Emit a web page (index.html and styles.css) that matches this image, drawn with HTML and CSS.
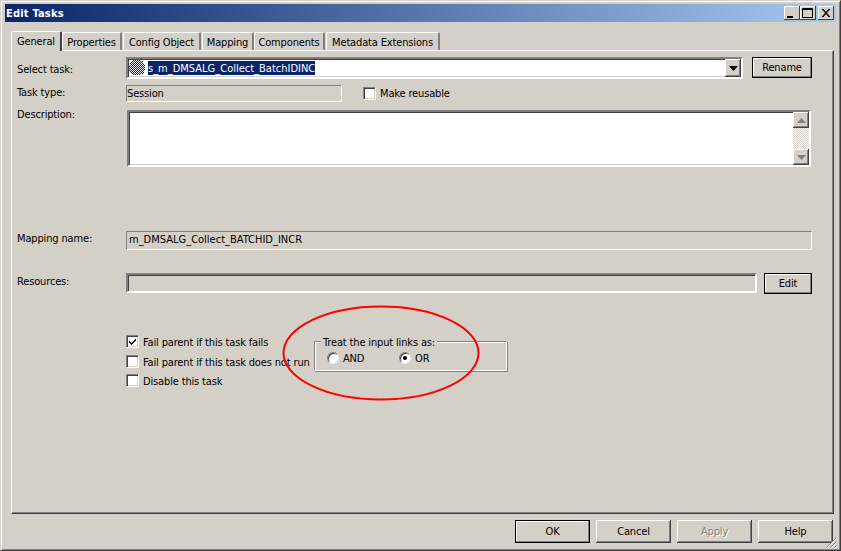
FILE: index.html
```html
<!DOCTYPE html>
<html lang="en">
<head>
<meta charset="utf-8">
<title>Edit Tasks</title>
<link rel="stylesheet" href="styles.css">
</head>
<body>
<div class="window">
  <div class="titlebar">
    <span class="title">Edit Tasks</span>
    <div class="caption-btns">
      <span class="cap"><svg width="16" height="14" viewBox="0 0 16 14"><rect x="3" y="10" width="6" height="2" fill="#000"/></svg></span>
      <span class="cap"><svg width="16" height="14" viewBox="0 0 16 14"><path d="M2.500 2.500h10v9h-10z M2.500 3.500h10" fill="none" stroke="#000"/></svg></span>
      <span class="cap cap-close"><svg width="16" height="14" viewBox="0 0 16 14"><path d="M4 3l7 8M5 3l7 8M11 3l-7 8M12 3l-7 8" fill="none" stroke="#000"/></svg></span>
    </div>
  </div>
  <div class="tabs">
    <span class="tab tab-active">General</span>
    <span class="tab tab-props">Properties</span>
    <span class="tab tab-config">Config Object</span>
    <span class="tab tab-map">Mapping</span>
    <span class="tab tab-comp">Components</span>
    <span class="tab tab-meta">Metadata Extensions</span>
  </div>
  <div class="pane">
    <div class="row row-select">
      <label class="lbl">Select task:</label>
      <div class="combo sunken">
        <svg class="task-icon" width="16" height="16" viewBox="0 0 16 16" shape-rendering="crispEdges"><defs><pattern id="dither" width="2" height="2" patternUnits="userSpaceOnUse"><rect width="2" height="2" fill="#eef0f6"/><rect width="1" height="1" fill="#0a246a"/><rect x="1" y="1" width="1" height="1" fill="#0a246a"/></pattern></defs><path d="M4 0h8v1h2v2h1v2h1v6h-1v2h-1v1h-2v1H4v-1H2v-1H1v-2H0V5h1V3h1V1h2z" fill="url(#dither)"/></svg>
        <span class="selected">s_m_DMSALG_Collect_BatchIDINC</span>
        <span class="drop raised"><svg width="9" height="5" viewBox="0 0 9 5"><path d="M0 0h9L4.500 5z" fill="#000"/></svg></span>
      </div>
      <button class="btn btn-default btn-rename" type="button">Rename</button>
    </div>
    <div class="row row-type">
      <label class="lbl">Task type:</label>
      <div class="readonly type-field">Session</div>
      <span class="check check-reuse"></span>
      <span class="check-text">Make reusable</span>
    </div>
    <div class="row row-desc">
      <label class="lbl">Description:</label>
      <div class="memo sunken">
        <div class="scroll">
          <span class="arrow raised"><svg width="9" height="5" viewBox="0 0 9 5"><path d="M0 5h9L4.500 0z" fill="#808080"/></svg></span>
          <span class="track"></span>
          <span class="arrow raised"><svg width="9" height="5" viewBox="0 0 9 5"><path d="M0 0h9L4.500 5z" fill="#808080"/></svg></span>
        </div>
      </div>
    </div>
    <div class="row row-map">
      <label class="lbl">Mapping name:</label>
      <div class="readonly map-field">m_DMSALG_Collect_BATCHID_INCR</div>
    </div>
    <div class="row row-res">
      <label class="lbl">Resources:</label>
      <div class="res-field sunken"></div>
      <button class="btn btn-default btn-edit" type="button">Edit</button>
    </div>
    <div class="lower">
      <div class="checks">
        <div class="check-row"><span class="check"><svg width="9" height="9" viewBox="0 0 9 9"><path d="M1 3.500l2.500 2.500L8 1.500v2L3.500 8 1 5.500z" fill="#000"/></svg></span><span class="check-text">Fail parent if this task fails</span></div>
        <div class="check-row"><span class="check"></span><span class="check-text">Fail parent if this task does not run</span></div>
        <div class="check-row"><span class="check"></span><span class="check-text">Disable this task</span></div>
      </div>
      <div class="group">
        <span class="legend">Treat the input links as:</span>
        <div class="radios">
          <span class="radio"></span><span class="radio-text radio-and">AND</span>
          <span class="radio radio-on"></span><span class="radio-text">OR</span>
        </div>
      </div>
    </div>
    <svg class="ellipse" width="202" height="100" viewBox="0 0 202 100"><ellipse cx="100" cy="48" rx="97.500" ry="46.500" fill="none" stroke="#f00" stroke-width="2"/></svg>
  </div>
  <div class="footer">
    <button class="btn btn-default btn-foot" type="button">OK</button>
    <button class="btn btn-foot" type="button">Cancel</button>
    <button class="btn btn-foot btn-disabled" type="button">Apply</button>
    <button class="btn btn-foot" type="button">Help</button>
  </div>
  <svg class="grip" width="12" height="12" viewBox="0 0 12 12"><path d="M11.500 1.500L1.500 11.500M11.500 5.500L5.500 11.500M11.500 9.500L9.500 11.500" stroke="#808080" fill="none"/><path d="M11.500 2.500L2.500 11.500M11.500 6.500L6.500 11.500M11.500 10.500L10.500 11.500" stroke="#fff" fill="none"/></svg>
</div>
</body>
</html>
```
FILE: styles.css
```css
* { box-sizing: border-box; }
html, body { margin: 0; padding: 0; }
body {
  width: 841px;
  height: 551px;
  overflow: hidden;
  background: #d4d0c8;
  font-family: "DejaVu Sans Condensed", "Noto Sans", sans-serif;
  font-size: 11px;
  letter-spacing: -0.15px;
  color: #000;
}
.window {
  position: relative;
  width: 841px;
  height: 551px;
  background: #d4d0c8;
  border: 1px solid;
  border-color: #d4d0c8 #404040 #404040 #d4d0c8;
  box-shadow: inset 1px 1px 0 #fff, inset -1px -1px 0 #808080;
  padding: 3px 4px 0 4px;
  display: flex;
  flex-direction: column;
}
.titlebar {
  height: 18px;
  flex: none;
  background: linear-gradient(90deg, #0a246a, #a6caf0);
  display: flex;
  align-items: center;
  justify-content: space-between;
  padding: 0 2px 0 1px;
}
.title {
  color: #fff;
  font-weight: 700;
  font-size: 11px;
  line-height: 18px;
  letter-spacing: 0.2px;
  padding-top: 2px;
}
.caption-btns { display: flex; }
.cap {
  width: 16px;
  height: 14px;
  background: #d4d0c8;
  box-shadow: inset -1px -1px 0 #404040, inset 1px 1px 0 #fff;
  display: block;
  font-size: 0;
}
.cap-close { margin-left: 2px; }
.tabs {
  flex: none;
  height: 28px;
  margin-left: 6px;
  display: flex;
  align-items: flex-end;
  position: relative;
  z-index: 1;
}
.tab {
  height: 18px;
  line-height: 20px;
  text-align: center;
  background: #d4d0c8;
  border-top: 1px solid #fff;
  border-left: 1px solid #fff;
  border-right: 2px solid #808080;
  border-radius: 2px 2px 0 0;
  white-space: nowrap;
}
.tab-active {
  width: 51px;
  height: 20px;
  line-height: 19px;
  margin-bottom: -1px;
  border-right-color: #404040;
}
.tab-props { width: 60px; }
.tab-config { width: 78px; margin-left: 1px; }
.tab-map { width: 52px; margin-left: 1px; }
.tab-comp { width: 71px; }
.tab-meta { width: 114px; margin-left: 1px; }
.pane {
  position: relative;
  flex: none;
  width: 823px;
  height: 464px;
  margin-left: 6px;
  border: 1px solid;
  border-color: #fff #404040 #404040 #fff;
  box-shadow: inset -1px -1px 0 #808080;
  padding: 6px 0 0 5px;
}
.row { display: flex; align-items: flex-start; }
.lbl { width: 109px; flex: none; line-height: 25px; white-space: nowrap; }
.sunken {
  background: #fff;
  border: 2px solid;
  border-color: #808080 #fff #fff #808080;
  box-shadow: inset 1px 1px 0 #404040, inset -1px -1px 0 #d4d0c8;
}
.raised {
  background: #d4d0c8;
  box-shadow: inset -1px -1px 0 #404040, inset 1px 1px 0 #fff, inset -2px -2px 0 #808080;
  display: flex;
  align-items: center;
  justify-content: center;
}
.readonly {
  background: #d4d0c8;
  border: 1px solid;
  border-color: #808080 #fff #fff #808080;
  white-space: nowrap;
}
.row-select { height: 22px; }
.combo {
  width: 617px;
  height: 22px;
  display: flex;
  align-items: center;
  padding-left: 1px;
}
.task-icon {
  margin-right: 3px;
  flex: none;
}
.selected {
  background: #0a246a;
  color: #fff;
  height: 14px;
  line-height: 15px;
  width: 167px;
  letter-spacing: 0;
  white-space: nowrap;
}
.drop { width: 16px; height: 18px; margin-left: auto; flex: none; }
.btn {
  font: inherit;
  letter-spacing: inherit;
  color: #000;
  background: #d4d0c8;
  border: 0;
  padding: 0;
  box-shadow: inset -1px -1px 0 #404040, inset 1px 1px 0 #fff, inset -2px -2px 0 #808080;
}
.btn-default {
  border: 1px solid #000;
  box-shadow: inset -1px -1px 0 #808080, inset 1px 1px 0 #fff;
}
.btn-rename { width: 60px; height: 21px; margin-left: 9px; }
.row-type { height: 17px; margin-top: 6px; }
.row-type .lbl { line-height: 16px; }
.type-field { width: 216px; height: 17px; line-height: 16px; }
.check {
  width: 13px;
  height: 13px;
  flex: none;
  background: #fff;
  border: 1px solid;
  border-color: #808080 #fff #fff #808080;
  box-shadow: inset 1px 1px 0 #404040, inset -1px -1px 0 #d4d0c8;
  display: flex;
  align-items: center;
  justify-content: center;
}
.check-reuse { margin: 2px 4px 0 21px; }
.check-text { white-space: nowrap; line-height: 17px; }
.check-row .check-text { padding-top: 2px; }
.row-desc { height: 57px; margin-top: 8px; }
.row-desc .lbl { margin-top: -8px; }
.memo {
  width: 684px;
  height: 57px;
  margin-left: 1px;
  display: flex;
  justify-content: flex-end;
}
.scroll { width: 16px; height: 53px; display: flex; flex-direction: column; margin-right: 0; }
.arrow { height: 16px; flex: none; }
.track {
  flex: 1;
  background: repeating-conic-gradient(#d4d0c8 0 25%, #fff 0 50%) 0 0 / 2px 2px;
}
.row-map { height: 19px; margin-top: 64px; }
.row-map .lbl { line-height: 16px; }
.map-field { width: 686px; height: 19px; line-height: 16px; padding-left: 2px; letter-spacing: 0; }
.row-res { height: 21px; margin-top: 23px; }
.row-res .lbl { line-height: 18px; }
.res-field { width: 631px; height: 20px; background: #d4d0c8; }
.btn-edit { width: 48px; height: 21px; margin-left: 7px; }
.lower { display: flex; margin-top: 41px; align-items: flex-start; }
.checks { margin-left: 109px; width: 188px; flex: none; display: flex; flex-direction: column; gap: 6.500px; }
.check-row { height: 13px; display: flex; align-items: center; gap: 4px; }
.group {
  position: relative;
  width: 193px;
  height: 30px;
  margin-top: 6px;
  border: 1px solid;
  border-color: #808080 #fff #fff #808080;
  box-shadow: inset 1px 1px 0 #fff, 1px 1px 0 #808080;
}
.legend {
  position: absolute;
  left: 6px;
  top: -7px;
  padding: 0 2px;
  line-height: 16px;
  background: #d4d0c8;
  white-space: nowrap;
}
.radios { display: flex; align-items: center; padding: 9px 0 0 12px; }
.radio {
  position: relative;
  width: 12px;
  height: 12px;
  flex: none;
  border-radius: 50%;
  background: #fff;
  border: 1px solid;
  border-color: #808080 #eee #eee #808080;
  box-shadow: inset 1px 1px 0 #404040;
}
.radio-on::after {
  content: "";
  position: absolute;
  left: 3px;
  top: 3px;
  width: 4px;
  height: 4px;
  border-radius: 50%;
  background: #000;
}
.radio-text { margin-left: 4px; line-height: 12px; padding-top: 2px; }
.radio-and { width: 56px; }
.ellipse { position: absolute; left: 269px; top: 254px; }
.footer {
  flex: none;
  display: flex;
  gap: 6px;
  margin-left: 510px;
  margin-top: 6px;
}
.btn-foot { width: 75px; height: 23px; }
.btn-disabled { color: #808080; text-shadow: 1px 1px 0 #fff; }
.grip { position: absolute; right: 3px; bottom: 2px; }
```
